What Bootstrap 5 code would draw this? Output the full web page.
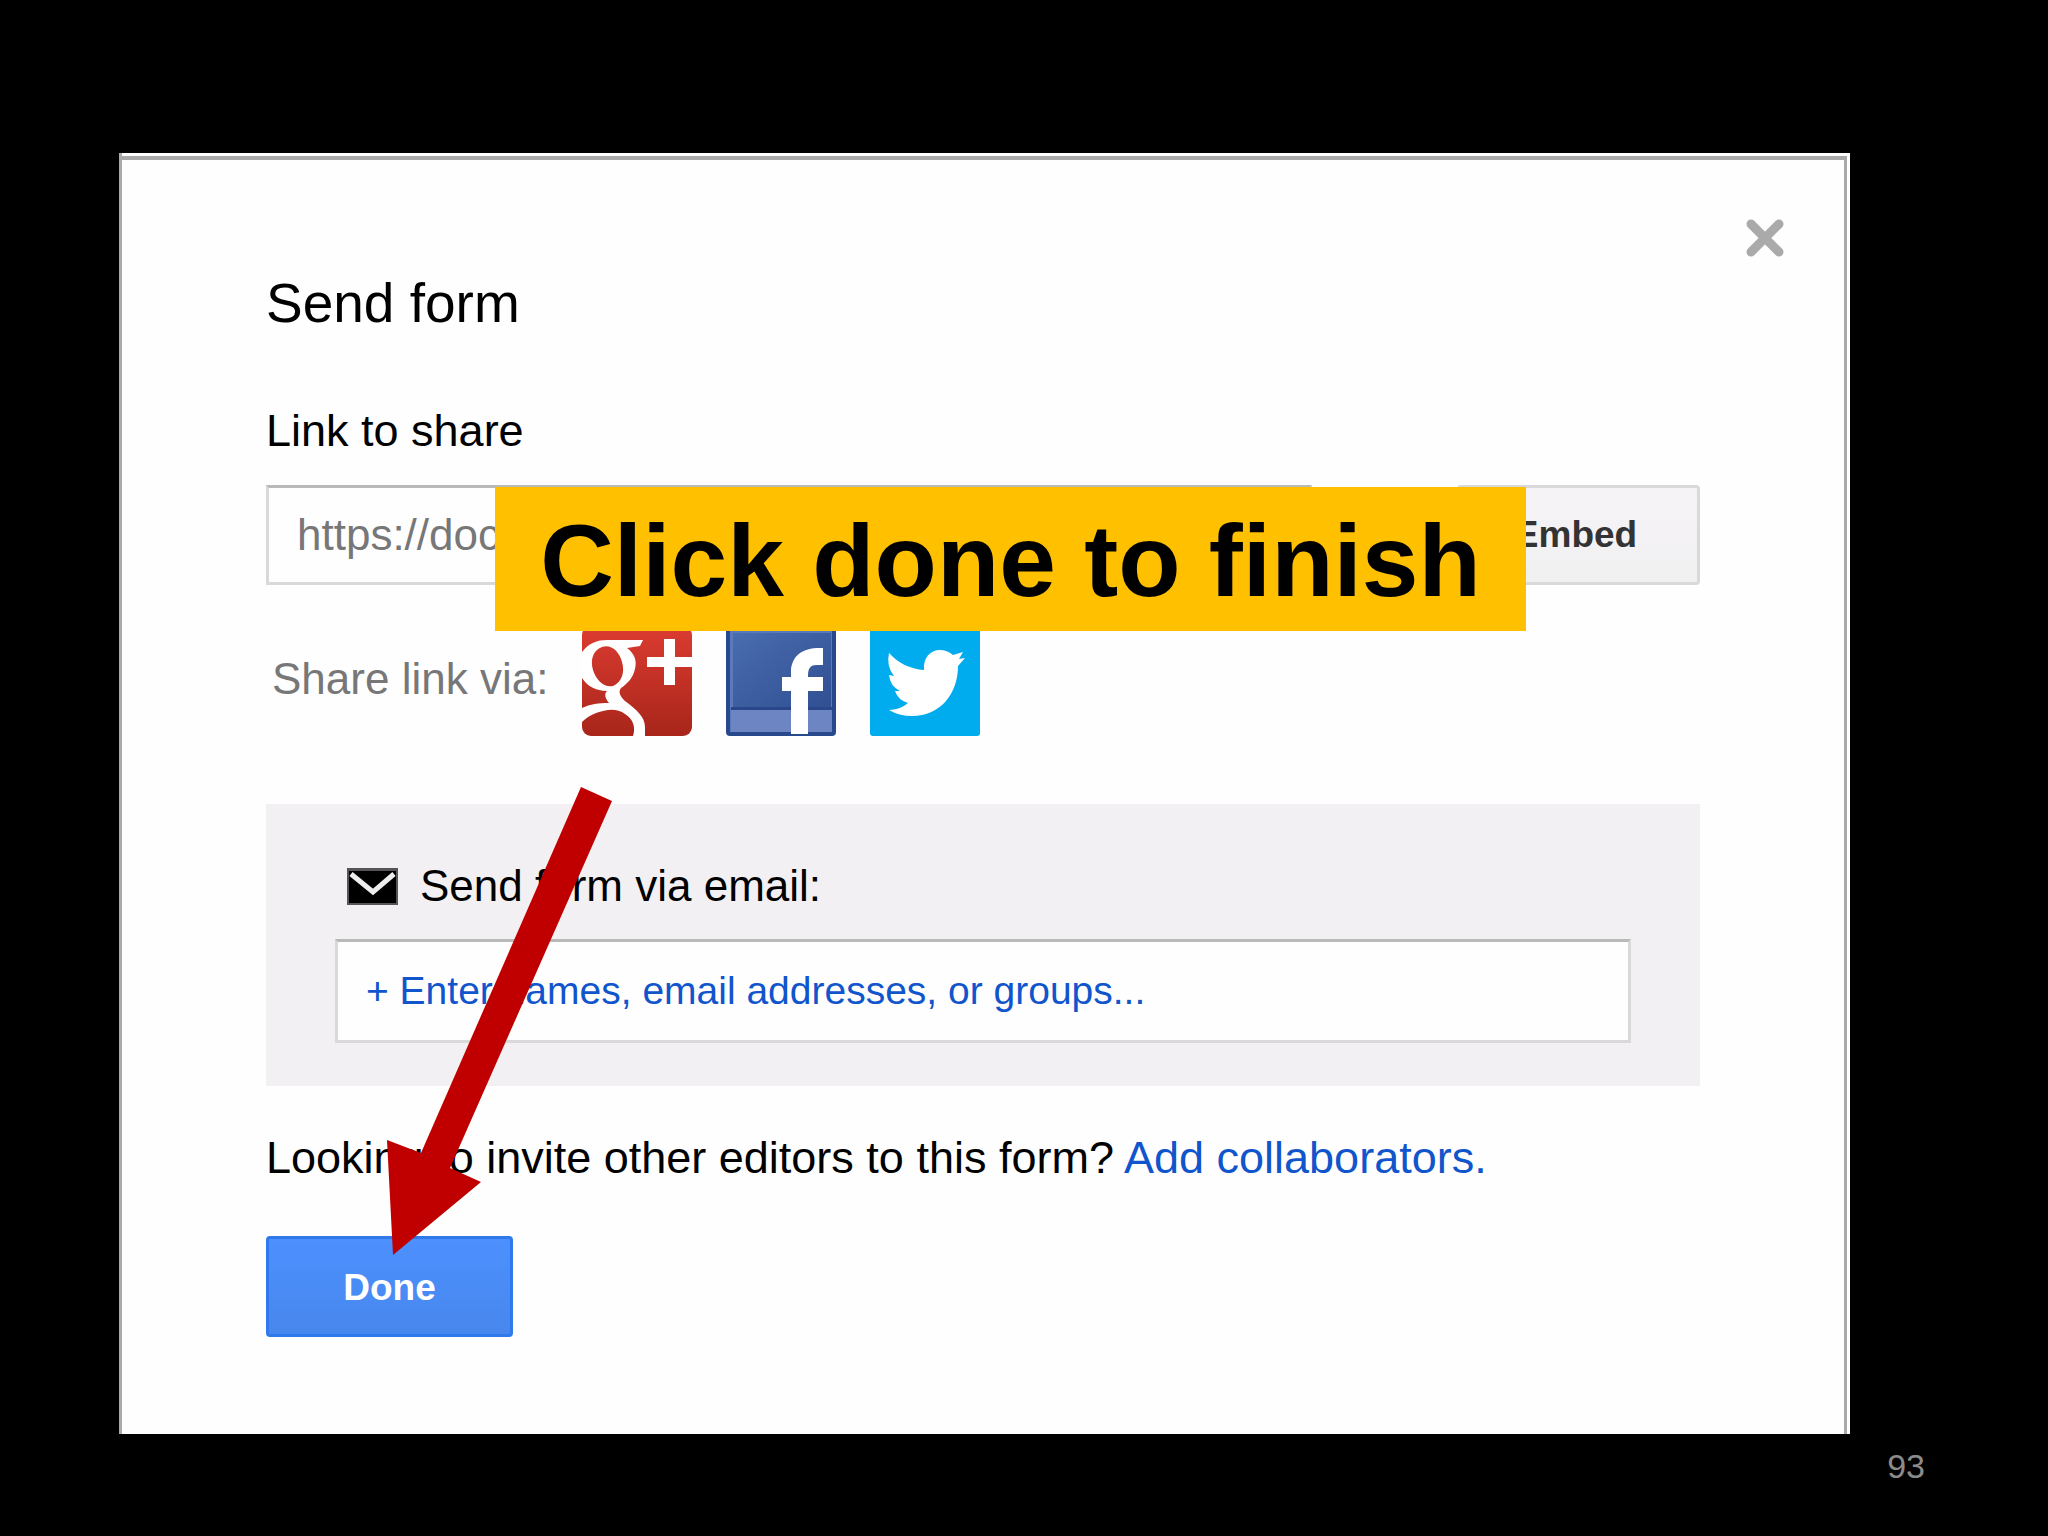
<!DOCTYPE html>
<html lang="en">
<head>
<meta charset="utf-8">
<meta name="viewport" content="width=device-width, initial-scale=1">
<title>Send form</title>
<link href="https://cdn.jsdelivr.net/npm/bootstrap@5.3.0/dist/css/bootstrap.min.css" rel="stylesheet">
<style>
  body { background: #000; color: #000; font-family: "Liberation Sans", Arial, sans-serif; font-size: 45px; line-height: 52px; font-variant-ligatures: none; }
  .slide { padding: 153px 198px 0 119px; }
  .dialog-frame { background: #fefefe; border-left: 3px solid #aaa; padding: 3px 3px 0 0; }
  .dialog-body { border-top: 4px solid #a9a9a9; border-right: 3px solid #a9a9a9; padding: 59px 144px 97px 144px; }
  .dialog-close { width: 38px; height: 38px; margin-right: -84px; }
  .dialog-title { font-size: 55px; line-height: 64px; margin: 14px 0 70px; }
  .link-label { margin-bottom: 28px; }
  .link-row { gap: 145px; margin-bottom: 41px; }
  .field { height: 100px; border: 3px solid #d9d9d9; border-top-color: #b9b9b9; border-radius: 0; background: #fefefe; padding: 0 28px; font-size: 44px; color: #777; }
  .field-names { height: 104px; font-size: 39px; }
  .field-names::placeholder { color: #15c; opacity: 1; }
  .field:focus { box-shadow: none; }
  .btn-flat { font-size: 37px; line-height: 44px; font-weight: 700; border-width: 3px; border-radius: 4px; height: 101px; }
  .btn-embed { width: 243px; height: 100px; padding: 6px 18px 6px 12px; color: #333; background: linear-gradient(#f5f3f6, #f1f0f1); border-color: #dad8da; }
  .btn-done { width: 247px; padding: 9px 12px 6px; color: #fff; background: linear-gradient(#4d90fe, #4787ed); border-color: #3079ed; }
  .share-row { gap: 34px; color: #777; font-size: 44px; margin-bottom: 68px; padding-left: 6px; }
  .share-row svg { width: 110px; height: 110px; display: block; }
  .share-text { padding-bottom: 4px; }
  .mail-box { background: #f2f0f2; padding: 56px 69px 43px; margin-bottom: 46px; }
  .mail-label { gap: 22px; padding-left: 12px; font-size: 44px; margin-bottom: 27px; }
  .mail-label svg { width: 51px; height: 37px; }
  .invite { margin-bottom: 52px; }
  .invite a { color: #15c; }
  .callout-banner { position: absolute; left: 229px; top: 2px; width: 1031px; height: 144px; background: #ffc000; font-size: 102px; line-height: 148px; font-weight: 700; z-index: 2; }
  .callout-arrow { position: absolute; left: 121px; top: 302px; width: 226px; height: 468px; z-index: 2; pointer-events: none; }
  .slide-number { color: #8b8b8b; font-size: 34px; line-height: 40px; margin: 12px -75px 0 0; }
</style>
<script src="https://cdn.jsdelivr.net/npm/bootstrap@5.3.0/dist/js/bootstrap.bundle.min.js"></script>
</head>
<body>
<main class="slide">
  <section class="dialog-frame" aria-labelledby="title">
    <div class="dialog-body">
      <div class="d-flex justify-content-end">
        <button type="button" class="btn p-0 border-0 d-flex dialog-close" aria-label="Close">
          <svg viewBox="0 0 38 38" width="38" height="38"><path d="M5 5 33 33M33 5 5 33" stroke="#aaa" stroke-width="9" stroke-linecap="round"/></svg>
        </button>
      </div>
      <h1 class="dialog-title fw-normal" id="title">Send form</h1>
      <label class="d-block link-label" for="url">Link to share</label>
      <div class="position-relative">
        <div class="d-flex link-row">
          <input class="form-control field flex-fill" id="url" type="text" value="https://docs" readonly>
          <button type="button" class="btn btn-flat btn-embed flex-shrink-0">Embed</button>
        </div>
        <div class="callout-banner text-center text-nowrap">Click done to finish</div>
        <svg class="callout-arrow" viewBox="0 0 226 468"><path d="M194 0 225 14 63 381 94 395 6 468 0 353 34 366z" fill="#c00000"/></svg>
        <div class="d-flex align-items-center share-row">
          <span class="share-text">Share link via:</span>
          <a href="#" aria-label="Google+">
            <svg viewBox="0 0 110 110">
              <defs><linearGradient id="gr" x2="0" y2="1"><stop stop-color="#dc3c31"/><stop offset="1" stop-color="#a8251a"/></linearGradient><clipPath id="gc"><rect width="110" height="110" rx="9"/></clipPath></defs>
              <g clip-path="url(#gc)"><rect width="110" height="110" fill="url(#gr)"/>
              <path fill="#fff" fill-rule="evenodd" d="M0 26C7 17 15 14 25 14H61L58 20 45 22C53 28 55 35 53 43C51 52 45 58 39 62C36 66 38 70 43 75C55 84 63 91 63 101V110H51C54 101 51 93 43 88C35 82 25 83 14 87Q6 90 0 96V82C8 78 17 77 27 77C23 72 22 68 25 65C14 65 5 60 0 52ZM20 21C11 24 8 34 11 44C14 54 22 62 31 60C40 56 43 46 40 36C37 25 29 18 20 21Z"/>
              <path fill="#fff" d="M82 13H93V31H110V41H93V59H82V41H65V31H82z"/></g>
            </svg>
          </a>
          <a href="#" aria-label="Facebook">
            <svg viewBox="0 0 110 110">
              <defs><linearGradient id="fb" x2="1" y2="1"><stop stop-color="#4a6db0"/><stop offset="1" stop-color="#2f4f92"/></linearGradient></defs>
              <rect width="110" height="110" rx="4" fill="#284a8c"/><rect x="4" y="4" width="102" height="102" fill="#5b7abb"/><rect x="7" y="7" width="98" height="77" fill="url(#fb)"/><rect x="5" y="81" width="101" height="3" fill="#29478a"/><rect x="5" y="84" width="101" height="22" fill="#6d85c2"/>
              <path fill="#fff" d="M65 108V65H56V51H65V43C67 29 77 21 97 22V39H91C84 39 82 42 82 51H97V65H82V108z"/>
            </svg>
          </a>
          <a href="#" aria-label="Twitter">
            <svg viewBox="0 0 110 110"><rect width="110" height="110" rx="3" fill="#00aced"/>
              <path fill="#fff" d="M19 27C28 37 40 43 54 44C53 32 60 24 70 24Q77 24 83 29L93 26 89 33 95 32 88 40C88 67 71 90 42 90Q29 90 19 84Q30 84 38 77Q28 74 25 65H30Q20 60 19 49L24 50Q16 40 19 27z"/>
            </svg>
          </a>
        </div>
      </div>
      <div class="mail-box">
        <label class="d-flex align-items-center mail-label" for="names">
          <svg viewBox="0 0 51 37" aria-hidden="true"><rect width="51" height="37" fill="#555"/><rect x="2" y="3" width="47" height="32" fill="#000"/><path d="M4 6 26 24 47 6" fill="none" stroke="#eee" stroke-width="5"/></svg>
          <span>Send form via email:</span>
        </label>
        <input class="form-control field field-names" id="names" type="text" placeholder="+ Enter names, email addresses, or groups...">
      </div>
      <p class="invite">Looking to invite other editors to this form? <a class="text-decoration-none" href="#">Add collaborators.</a></p>
      <button type="button" class="btn btn-flat btn-done d-block">Done</button>
    </div>
  </section>
  <div class="slide-number text-end">93</div>
</main>
</body>
</html>
